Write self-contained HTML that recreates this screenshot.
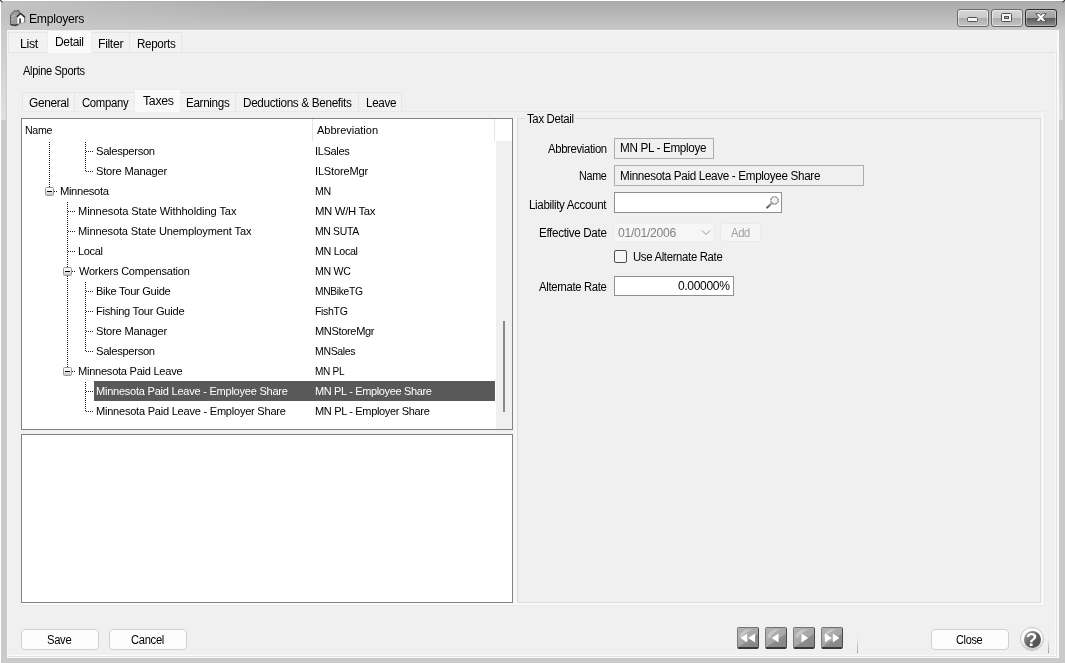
<!DOCTYPE html>
<html lang="en">
<head>
<meta charset="utf-8">
<title>Employers</title>
<style>
*{box-sizing:border-box;margin:0;padding:0}
html,body{width:1065px;height:663px;overflow:hidden;background:#fff}
body{position:relative;font-family:"Liberation Sans",sans-serif;font-size:11px;color:#000}
div,span,svg{position:absolute}
.root{left:0;top:0;width:1065px;height:663px;will-change:transform;transform:translateZ(0)}
.win{left:1px;top:1px;width:1064px;height:662px;background:#cacaca}
.fl{background:linear-gradient(rgba(255,255,255,0),rgba(255,255,255,.42));top:29px;height:90px;width:5px}
.tbar{left:0;top:0;width:1064px;height:29px;background:radial-gradient(ellipse 280px 30px at 0 0,rgba(255,255,255,.3) 0,rgba(255,255,255,.16) 40%,rgba(255,255,255,0) 100%),linear-gradient(#9e9e9e 0,#acacac 1px,#b3b3b3 10px,#c9c9c9 29px)}
.client{left:7px;top:30px;width:1052px;height:628px;background:#f0f0f0;box-shadow:inset 1px 1px 0 #f6f6f6,inset -2px -1px 0 #fafafa}
.t{white-space:nowrap;line-height:16px;height:16px;transform-origin:0 0}
.cap{top:9px;height:18px;border:1px solid #6a6a6a;border-radius:3px;background:linear-gradient(#d6d6d6 0,#cbcbcb 48%,#adadad 52%,#c4c4c4 100%);box-shadow:inset 0 0 0 1px rgba(255,255,255,.5)}
.cap.x{background:linear-gradient(#b4b4b4 0,#a0a0a0 48%,#5c5c5c 52%,#8c8c8c 100%);border-color:#2c2c2c;box-shadow:inset 0 0 0 1px rgba(255,255,255,.35)}
.tab{border:1px solid #e6e6e6;border-bottom:none;background:#f2f2f2}
.tab.on{background:#fafafa;border-color:#ececec}
.ln{background:#e4e4e4}
.panel{background:#fff;border:1px solid #828282}
.sel{background:#595959}
.btn{border:1px solid #d0d0d0;border-radius:4px;background:#fdfdfd}
.inp{border:1px solid #adadad;background:#f0f0f0}
.inp.w{background:#fff;border-color:#8f8f8f}
.dv{width:1px;background-image:linear-gradient(#1c1c1c 50%,rgba(0,0,0,0) 50%);background-size:1px 2px}
.dh{height:1px;background-image:linear-gradient(90deg,#1c1c1c 50%,rgba(0,0,0,0) 50%);background-size:2px 1px}
.exp{width:9px;height:9px;border:1px solid #989898;background:linear-gradient(#fdfdfd 0,#f0f0f0 45%,#c4c4c4 100%);border-radius:1.5px}
.exp:after{content:"";position:absolute;left:1px;top:3px;width:5px;height:1px;background:#000}
.nav{width:22px;height:22px;border-radius:2px;border:1px solid #4a4a4a;border-top-color:#747474;border-left-color:#7c7c7c;border-bottom:2px solid #383838;background:linear-gradient(146deg,#b4b4b4 0,#a6a6a6 58%,#8b8b8b 61%,#868686 100%)}
</style>
</head>
<body>
<div class="root">
<div class="win"><div class="tbar"></div><div class="fl" style="left:0"></div><div class="fl" style="left:1058px;width:4px"></div></div>
<svg style="left:0;top:0" width="4" height="4" viewBox="0 0 4 4"><path d="M0 0 L2.4 2.4" stroke="#3a3a3a" stroke-width="1.2"/></svg>
<svg style="left:1061px;top:0" width="4" height="4" viewBox="0 0 4 4"><path d="M4 0 L1.6 2.4" stroke="#3a3a3a" stroke-width="1.2"/></svg>
<div class="client"></div>
<div class="cap" style="left:957px;width:32px"><div style="left:9px;top:7px;width:11px;height:5px;background:#f6f6f6;border:1px solid #505050;border-radius:1.5px"></div></div>
<div class="cap" style="left:991px;width:32px"><div style="left:9px;top:3px;width:11px;height:9px;background:#f6f6f6;border:1px solid #505050;border-radius:1.5px"><div style="left:2px;top:2px;width:5px;height:3px;background:#b5b5b5;border:1px solid #505050"></div></div></div>
<div class="cap x" style="left:1025px;width:32px"><svg style="left:9px;top:3px" width="12" height="10" viewBox="0 0 12 10"><path d="M.6 .6 L4.3 .6 L5.9 2.4 L7.5 .6 L11.2 .6 L7.9 4.5 L11.2 8.4 L7.5 8.4 L5.9 6.6 L4.3 8.4 L.6 8.4 L3.9 4.5 Z" fill="#fdfdfd" stroke="#404040" stroke-width=".8" stroke-linejoin="round"/></svg></div>
<svg style="left:9px;top:9px" width="18" height="18" viewBox="9 9 18 18"><path d="M10.6 14.8 L14.6 10.6 L16.6 11.8 L17 10.4 L19 10.6 L19.4 13.6 L18.6 24.6 L11 25 L10.4 23.6 Z" fill="#9c9c9c" stroke="#5a5a5a" stroke-width="1" stroke-linejoin="round"/><path d="M12 17 l3 -2 M11.6 20 l2 -1" stroke="#c4c4c4" stroke-width="1" fill="none"/><path d="M17 17.2 L20.6 13.6 L24.8 17.4 L24.8 22.4 L17 24 Z" fill="#fdfdfd" stroke="#8a8a8a" stroke-width=".6"/><path d="M16.8 17 L20.6 13.4 L25 17.4" fill="none" stroke="#2e2e2e" stroke-width="1.5" stroke-linejoin="miter"/><rect x="19.2" y="18.4" width="1.8" height="4.8" fill="#4a4a4a"/><rect x="24.2" y="17.6" width=".9" height="4.8" fill="#6a6a6a"/><path d="M10.6 24.4 L15 25.6 L18 24.6" stroke="#3a3a3a" stroke-width="1.4" fill="none"/></svg>
<div class="tab" style="left:8px;top:32px;width:40px;height:21px"></div>
<div class="tab" style="left:91px;top:32px;width:39px;height:21px"></div>
<div class="tab" style="left:129px;top:32px;width:53px;height:21px"></div>
<div class="ln" style="left:8px;top:52px;width:1049px;height:1px"></div>
<div style="left:1055px;top:53px;width:1px;height:603px;background:#f8f8f8"></div>
<div class="ln" style="left:1056px;top:52px;width:1px;height:605px"></div>
<div class="tab on" style="left:47px;top:30px;width:45px;height:23px"></div>
<div class="tab" style="left:22px;top:92px;width:53px;height:20px"></div>
<div class="tab" style="left:74px;top:92px;width:61px;height:20px"></div>
<div class="tab" style="left:180px;top:92px;width:56px;height:20px"></div>
<div class="tab" style="left:235px;top:92px;width:124px;height:20px"></div>
<div class="tab" style="left:358px;top:92px;width:44px;height:20px"></div>
<div class="ln" style="left:21px;top:111px;width:1024px;height:1px;background:#e9e9e9"></div>
<div style="left:1041px;top:112px;width:3px;height:493px;background:linear-gradient(90deg,#f3f3f3 0,#f8f8f8 1px)"></div>
<div style="left:21px;top:603px;width:1023px;height:2px;background:#f8f8f8"></div>
<div style="left:513px;top:118px;width:4px;height:486px;background:#f7f7f7"></div>
<div class="ln" style="left:1044px;top:111px;width:1px;height:495px;background:#eaeaea"></div>
<div class="ln" style="left:21px;top:605px;width:1024px;height:1px;background:#e8e8e8"></div>
<div class="tab on" style="left:134px;top:89px;width:47px;height:23px"></div>
<div class="panel" style="left:21px;top:118px;width:492px;height:312px"></div>
<div style="left:496px;top:119px;width:16px;height:310px;background:#f0f0f0"></div>
<div style="left:495px;top:119px;width:17px;height:22px;background:#fff"></div>
<div style="left:312px;top:119px;width:1px;height:22px;background:#e5e5e5"></div>
<div style="left:494px;top:119px;width:1px;height:22px;background:#e5e5e5"></div>
<div style="left:503px;top:321px;width:2px;height:91px;background:#8a8a8a"></div>
<div class="sel" style="left:94px;top:381px;width:401px;height:20px"></div>
<div class="dv" style="left:49px;top:142px;height:45px"></div>
<div class="dv" style="left:85px;top:142px;height:29px"></div>
<div class="dh" style="left:86px;top:151px;width:8px"></div>
<div class="dh" style="left:86px;top:171px;width:8px"></div>
<div class="exp" style="left:45px;top:187px"></div>
<div class="dh" style="left:54px;top:191px;width:4px"></div>
<div class="dv" style="left:67px;top:202px;height:165px"></div>
<div class="dh" style="left:68px;top:211px;width:8px"></div>
<div class="dh" style="left:68px;top:231px;width:8px"></div>
<div class="dh" style="left:68px;top:251px;width:8px"></div>
<div class="exp" style="left:63px;top:267px"></div>
<div class="dh" style="left:72px;top:271px;width:4px"></div>
<div class="dv" style="left:85px;top:282px;height:69px"></div>
<div class="dh" style="left:86px;top:291px;width:8px"></div>
<div class="dh" style="left:86px;top:311px;width:8px"></div>
<div class="dh" style="left:86px;top:331px;width:8px"></div>
<div class="dh" style="left:86px;top:351px;width:8px"></div>
<div class="exp" style="left:63px;top:367px"></div>
<div class="dh" style="left:72px;top:371px;width:4px"></div>
<div class="dv" style="left:85px;top:382px;height:29px"></div>
<div class="dh" style="left:86px;top:391px;width:8px"></div>
<div class="dh" style="left:86px;top:411px;width:8px"></div>
<div class="panel" style="left:21px;top:434px;width:492px;height:169px"></div>
<div style="left:517px;top:118px;width:524px;height:485px;border:1px solid #dcdcdc"></div>
<div style="left:525px;top:116px;width:51px;height:5px;background:#f0f0f0"></div>
<div class="inp" style="left:614px;top:138px;width:100px;height:21px"></div>
<div class="inp" style="left:614px;top:165px;width:250px;height:21px"></div>
<div class="inp w" style="left:614px;top:192px;width:168px;height:21px"></div>
<svg style="left:765px;top:195px" width="15" height="15" viewBox="0 0 15 15"><defs><linearGradient id="mg" x1="1" y1="0" x2="0" y2="1"><stop offset="0" stop-color="#a8a8a8"/><stop offset="1" stop-color="#4c4c4c"/></linearGradient></defs><circle cx="9.5" cy="5.4" r="3.7" fill="#f2f2f2" stroke="#787878" stroke-width="1.15" stroke-dasharray="2.3 0.6"/><path d="M6.9 8 L2.2 12.6" stroke="url(#mg)" stroke-width="2" stroke-linecap="round"/></svg>
<div style="left:614px;top:223px;width:100px;height:19px;background:#f6f6f6;border:1px solid #ededed;border-radius:3px"></div>
<svg style="left:701px;top:229px" width="10" height="7" viewBox="0 0 10 7"><path d="M1 1.5 L5 5.5 L9 1.5" fill="none" stroke="#9a9a9a" stroke-width="1"/></svg>
<div style="left:720px;top:223px;width:41px;height:19px;background:#f5f5f5;border:1px solid #ebebeb;border-radius:3px"></div>
<div style="left:614px;top:250px;width:13px;height:13px;background:#f6f6f6;border:1px solid #4d4d4d;border-radius:2px"></div>
<div class="inp w" style="left:614px;top:276px;width:120px;height:20px"></div>
<div class="btn" style="left:21px;top:629px;width:78px;height:21px"></div>
<div class="btn" style="left:109px;top:629px;width:78px;height:21px"></div>
<div class="btn" style="left:931px;top:629px;width:78px;height:21px"></div>
<div class="nav" style="left:737px;top:627px"><svg style="left:-1px;top:-1px" width="22" height="22" viewBox="0 0 22 22"><path d="M2 10 Q4 4 10 2.5 L15 2.5 Q8 5 5 11 Z" fill="#cfcfcf" opacity=".75"/><path d="M10.2 6.5 L10.2 15.5 L3.6 11 Z M18.1 6.5 L18.1 15.5 L11.2 11 Z" fill="#fff"/></svg></div>
<div class="nav" style="left:765px;top:627px"><svg style="left:-1px;top:-1px" width="22" height="22" viewBox="0 0 22 22"><path d="M2 10 Q4 4 10 2.5 L15 2.5 Q8 5 5 11 Z" fill="#cfcfcf" opacity=".75"/><path d="M13.5 6.5 L13.5 15.5 L6.8 11 Z" fill="#fff"/></svg></div>
<div class="nav" style="left:793px;top:627px"><svg style="left:-1px;top:-1px" width="22" height="22" viewBox="0 0 22 22"><path d="M2 10 Q4 4 10 2.5 L15 2.5 Q8 5 5 11 Z" fill="#cfcfcf" opacity=".75"/><path d="M8.5 6.5 L15.2 11 L8.5 15.5 Z" fill="#fff"/></svg></div>
<div class="nav" style="left:821px;top:627px"><svg style="left:-1px;top:-1px" width="22" height="22" viewBox="0 0 22 22"><path d="M2 10 Q4 4 10 2.5 L15 2.5 Q8 5 5 11 Z" fill="#cfcfcf" opacity=".75"/><path d="M3.9 6.5 L10.8 11 L3.9 15.5 Z M11.8 6.5 L18.4 11 L11.8 15.5 Z" fill="#fff"/></svg></div>
<div style="left:857px;top:626px;width:1px;height:27px;background:linear-gradient(rgba(120,120,120,0) 0,rgba(120,120,120,.06) 50%,rgba(120,120,120,.7) 100%)"></div>
<div style="left:1048px;top:626px;width:1px;height:27px;background:linear-gradient(rgba(120,120,120,0) 0,rgba(120,120,120,.06) 50%,rgba(120,120,120,.7) 100%)"></div>
<div style="left:1020px;top:627px;width:24px;height:24px;border-radius:12px;background:linear-gradient(#fff 0,#fbfbfb 55%,#c9c9c9 100%);border:1px solid #c6c6c6"></div>
<div style="left:1023.5px;top:630.5px;width:17px;height:17px;border-radius:9px;background:linear-gradient(135deg,#9a9a9a 10%,#5a5a5a 55%,#505050 100%)"></div>
<span class="t" style="left:1025.5px;top:630px;font-size:19px;font-weight:bold;color:#fff;line-height:20px;height:20px;width:12px;text-align:center">?</span>
<div style="left:8px;top:655px;width:1048px;height:1px;background:#fafafa"></div>
<div class="ln" style="left:8px;top:656px;width:1049px;height:1px"></div>
<span class="t" style="left:29px;top:11px;font-size:12px;letter-spacing:-0.285px;transform:scaleX(1.0187);text-shadow:0 0 6px rgba(255,255,255,.45)">Employers</span>
<span class="t" style="left:20px;top:36px;font-size:12px;letter-spacing:-0.35px;transform:scaleX(1.034)">List</span>
<span class="t" style="left:55px;top:34px;font-size:12px;letter-spacing:-0.35px;transform:scaleX(1.0032)">Detail</span>
<span class="t" style="left:98px;top:36px;font-size:12px;letter-spacing:-0.35px;transform:scaleX(1.0222)">Filter</span>
<span class="t" style="left:137px;top:36px;font-size:12px;letter-spacing:-0.35px;transform:scaleX(0.9699)">Reports</span>
<span class="t" style="left:23px;top:63px;font-size:12px;letter-spacing:-0.35px;transform:scaleX(0.9216)">Alpine Sports</span>
<span class="t" style="left:29px;top:95px;font-size:12px;letter-spacing:-0.35px;transform:scaleX(0.992)">General</span>
<span class="t" style="left:82px;top:95px;font-size:12px;letter-spacing:-0.35px;transform:scaleX(0.9458)">Company</span>
<span class="t" style="left:143px;top:93px;font-size:12px;letter-spacing:-0.337px;transform:scaleX(1.0324)">Taxes</span>
<span class="t" style="left:186px;top:95px;font-size:12px;letter-spacing:-0.35px;transform:scaleX(0.9738)">Earnings</span>
<span class="t" style="left:243px;top:95px;font-size:12px;letter-spacing:-0.35px;transform:scaleX(0.9801)">Deductions &amp; Benefits</span>
<span class="t" style="left:366px;top:95px;font-size:12px;letter-spacing:-0.35px;transform:scaleX(0.9716)">Leave</span>
<span class="t" style="left:25px;top:122px;font-size:11px;letter-spacing:-0.35px;transform:scaleX(0.9692)">Name</span>
<span class="t" style="left:317px;top:122px;font-size:11px;letter-spacing:-0.03px;transform:scaleX(1.0033)">Abbreviation</span>
<span class="t" style="left:96px;top:143px;font-size:11px;letter-spacing:-0.313px;transform:scaleX(1.0182)">Salesperson</span>
<span class="t" style="left:315px;top:143px;font-size:11px;letter-spacing:-0.35px;transform:scaleX(1.0033)">ILSales</span>
<span class="t" style="left:96px;top:163px;font-size:11px;letter-spacing:-0.208px;transform:scaleX(1.0133)">Store Manager</span>
<span class="t" style="left:315px;top:163px;font-size:11px;letter-spacing:-0.172px;transform:scaleX(1.0047)">ILStoreMgr</span>
<span class="t" style="left:60px;top:183px;font-size:11px;letter-spacing:-0.35px;transform:scaleX(1.0199)">Minnesota</span>
<span class="t" style="left:315px;top:183px;font-size:11px;letter-spacing:-0.35px;transform:scaleX(0.9646)">MN</span>
<span class="t" style="left:78px;top:203px;font-size:11px;letter-spacing:-0.097px;transform:scaleX(1.0087)">Minnesota State Withholding Tax</span>
<span class="t" style="left:315px;top:203px;font-size:11px;letter-spacing:-0.335px;transform:scaleX(1.0319)">MN W/H Tax</span>
<span class="t" style="left:78px;top:223px;font-size:11px;letter-spacing:-0.142px;transform:scaleX(1.008)">Minnesota State Unemployment Tax</span>
<span class="t" style="left:315px;top:223px;font-size:11px;letter-spacing:-0.35px;transform:scaleX(0.9468)">MN SUTA</span>
<span class="t" style="left:78px;top:243px;font-size:11px;letter-spacing:-0.35px;transform:scaleX(1.0045)">Local</span>
<span class="t" style="left:315px;top:243px;font-size:11px;letter-spacing:-0.35px;transform:scaleX(0.9773)">MN Local</span>
<span class="t" style="left:79px;top:263px;font-size:11px;letter-spacing:-0.195px;transform:scaleX(0.9974)">Workers Compensation</span>
<span class="t" style="left:315px;top:263px;font-size:11px;letter-spacing:-0.35px;transform:scaleX(0.9661)">MN WC</span>
<span class="t" style="left:96px;top:283px;font-size:11px;letter-spacing:-0.303px;transform:scaleX(1.0128)">Bike Tour Guide</span>
<span class="t" style="left:315px;top:283px;font-size:11px;letter-spacing:-0.35px;transform:scaleX(0.9338)">MNBikeTG</span>
<span class="t" style="left:96px;top:303px;font-size:11px;letter-spacing:-0.265px;transform:scaleX(1.0111)">Fishing Tour Guide</span>
<span class="t" style="left:315px;top:303px;font-size:11px;letter-spacing:-0.35px;transform:scaleX(0.9565)">FishTG</span>
<span class="t" style="left:96px;top:323px;font-size:11px;letter-spacing:-0.208px;transform:scaleX(1.0133)">Store Manager</span>
<span class="t" style="left:315px;top:323px;font-size:11px;letter-spacing:-0.35px;transform:scaleX(1.0049)">MNStoreMgr</span>
<span class="t" style="left:96px;top:343px;font-size:11px;letter-spacing:-0.313px;transform:scaleX(1.0182)">Salesperson</span>
<span class="t" style="left:315px;top:343px;font-size:11px;letter-spacing:-0.35px;transform:scaleX(0.9547)">MNSales</span>
<span class="t" style="left:78px;top:363px;font-size:11px;letter-spacing:-0.265px;transform:scaleX(1.0076)">Minnesota Paid Leave</span>
<span class="t" style="left:315px;top:363px;font-size:11px;letter-spacing:-0.35px;transform:scaleX(0.9172)">MN PL</span>
<span class="t" style="left:96px;top:383px;font-size:11px;letter-spacing:-0.243px;color:#fff;transform:scaleX(1.0036)">Minnesota Paid Leave - Employee Share</span>
<span class="t" style="left:315px;top:383px;font-size:11px;letter-spacing:-0.35px;color:#fff">MN PL - Employee Share</span>
<span class="t" style="left:96px;top:403px;font-size:11px;letter-spacing:-0.23px;transform:scaleX(1.0036)">Minnesota Paid Leave - Employer Share</span>
<span class="t" style="left:315px;top:403px;font-size:11px;letter-spacing:-0.35px;transform:scaleX(1.0026)">MN PL - Employer Share</span>
<span class="t" style="left:527px;top:111px;font-size:12px;letter-spacing:-0.35px;transform:scaleX(0.95)">Tax Detail</span>
<span class="t" style="left:548px;top:141px;font-size:12px;letter-spacing:-0.35px;transform:scaleX(0.941)">Abbreviation</span>
<span class="t" style="left:620px;top:140px;font-size:12px;letter-spacing:-0.35px;transform:scaleX(0.9752)">MN PL - Employe</span>
<span class="t" style="left:579px;top:168px;font-size:12px;letter-spacing:-0.35px;transform:scaleX(0.8987)">Name</span>
<span class="t" style="left:620px;top:168px;font-size:12px;letter-spacing:-0.35px;transform:scaleX(0.975)">Minnesota Paid Leave - Employee Share</span>
<span class="t" style="left:529px;top:197px;font-size:12px;letter-spacing:-0.35px;transform:scaleX(0.9629)">Liability Account</span>
<span class="t" style="left:539px;top:225px;font-size:12px;letter-spacing:-0.35px;transform:scaleX(0.9705)">Effective Date</span>
<span class="t" style="left:618px;top:225px;font-size:12px;letter-spacing:-0.321px;color:#838383;transform:scaleX(1.0192)">01/01/2006</span>
<span class="t" style="left:731px;top:225px;font-size:12px;letter-spacing:-0.35px;color:#a0a0a0;transform:scaleX(0.9324)">Add</span>
<span class="t" style="left:633px;top:249px;font-size:12px;letter-spacing:-0.35px;transform:scaleX(0.9464)">Use Alternate Rate</span>
<span class="t" style="left:539px;top:279px;font-size:12px;letter-spacing:-0.35px;transform:scaleX(0.9407)">Alternate Rate</span>
<span class="t" style="left:678px;top:278px;font-size:12px;letter-spacing:-0.35px;transform:scaleX(1.005)">0.00000%</span>
<span class="t" style="left:47px;top:632px;font-size:12px;letter-spacing:-0.35px;transform:scaleX(0.9368)">Save</span>
<span class="t" style="left:131px;top:632px;font-size:12px;letter-spacing:-0.35px;transform:scaleX(0.9349)">Cancel</span>
<span class="t" style="left:956px;top:632px;font-size:12px;letter-spacing:-0.35px;transform:scaleX(0.9118)">Close</span>
</div>
</body>
</html>
